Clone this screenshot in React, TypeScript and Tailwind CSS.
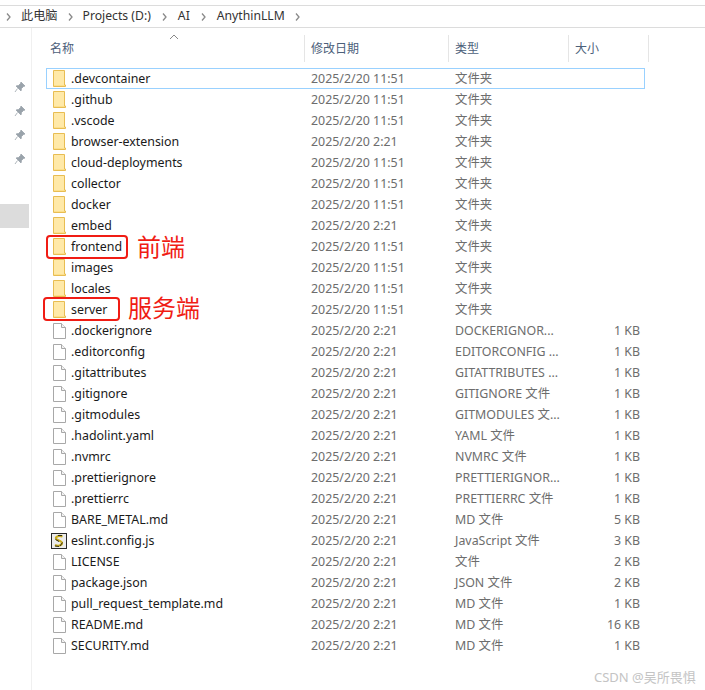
const font = "font-['Noto_Sans','Noto_Sans_CJK_SC',sans-serif]";

type Row = { name: string; date: string; type: string; size?: string; icon?: "folder" | "file" | "script" };

const d1 = "2025/2/20 11:51";
const d2 = "2025/2/20 2:21";

const rows: Row[] = [
  { name: ".devcontainer", date: d1, type: "文件夹" },
  { name: ".github", date: d1, type: "文件夹" },
  { name: ".vscode", date: d1, type: "文件夹" },
  { name: "browser-extension", date: d2, type: "文件夹" },
  { name: "cloud-deployments", date: d1, type: "文件夹" },
  { name: "collector", date: d1, type: "文件夹" },
  { name: "docker", date: d1, type: "文件夹" },
  { name: "embed", date: d2, type: "文件夹" },
  { name: "frontend", date: d1, type: "文件夹" },
  { name: "images", date: d1, type: "文件夹" },
  { name: "locales", date: d1, type: "文件夹" },
  { name: "server", date: d1, type: "文件夹" },
  { name: ".dockerignore", date: d2, type: "DOCKERIGNOR...", size: "1 KB", icon: "file" },
  { name: ".editorconfig", date: d2, type: "EDITORCONFIG ...", size: "1 KB", icon: "file" },
  { name: ".gitattributes", date: d2, type: "GITATTRIBUTES ...", size: "1 KB", icon: "file" },
  { name: ".gitignore", date: d2, type: "GITIGNORE 文件", size: "1 KB", icon: "file" },
  { name: ".gitmodules", date: d2, type: "GITMODULES 文...", size: "1 KB", icon: "file" },
  { name: ".hadolint.yaml", date: d2, type: "YAML 文件", size: "1 KB", icon: "file" },
  { name: ".nvmrc", date: d2, type: "NVMRC 文件", size: "1 KB", icon: "file" },
  { name: ".prettierignore", date: d2, type: "PRETTIERIGNOR...", size: "1 KB", icon: "file" },
  { name: ".prettierrc", date: d2, type: "PRETTIERRC 文件", size: "1 KB", icon: "file" },
  { name: "BARE_METAL.md", date: d2, type: "MD 文件", size: "5 KB", icon: "file" },
  { name: "eslint.config.js", date: d2, type: "JavaScript 文件", size: "3 KB", icon: "script" },
  { name: "LICENSE", date: d2, type: "文件", size: "2 KB", icon: "file" },
  { name: "package.json", date: d2, type: "JSON 文件", size: "2 KB", icon: "file" },
  { name: "pull_request_template.md", date: d2, type: "MD 文件", size: "1 KB", icon: "file" },
  { name: "README.md", date: d2, type: "MD 文件", size: "16 KB", icon: "file" },
  { name: "SECURITY.md", date: d2, type: "MD 文件", size: "1 KB", icon: "file" },
];

function FolderIcon() {
  return (
    <svg width="13" height="17" viewBox="0 0 13 17" className="shrink-0">
      <path d="M0.5 0.5H11.5V15H12.5V16.5H0.5Z" fill="#fde08c" stroke="#e8bd52" />
      <rect x="1" y="1" width="10" height="14" fill="#ffe9a8" />
    </svg>
  );
}

function FileIcon() {
  return (
    <svg width="13" height="16" viewBox="0 0 13 16" className="shrink-0">
      <path d="M0.5 0.5H8.5L12.5 4.5V15.5H0.5Z" fill="#ffffff" stroke="#a8a8a8" />
      <path d="M8.5 0.5V4.5H12.5" fill="#f2f2f2" stroke="#a8a8a8" />
    </svg>
  );
}

function ScriptIcon() {
  return (
    <svg width="16" height="16" viewBox="0 0 16 16" className="-ml-[2px] mr-[-1px] shrink-0">
      <rect x="0.5" y="0.5" width="15" height="15" fill="#ececec" stroke="#2a2a2a" />
      <path d="M11.5 3.5C8 2 4.5 3.5 5 5.5C5.5 7.5 11 7.5 11 10C11 12.5 7 13.5 4 12" fill="none" stroke="#c9ac1c" strokeWidth="2.2" />
      <path d="M11 2.5L7 2.5M4.5 6.5L8 8.5M11.5 9.5L9 13M4 13L8 13.5" fill="none" stroke="#1c1c1c" strokeWidth="0.9" />
    </svg>
  );
}

function Pin() {
  return (
    <svg width="12" height="12" viewBox="0 0 12 12">
      <path d="M7 1L11 5L9.5 5.5L7.5 7.5L7 10L2 5L4.5 4.5L6.5 2.5Z M3.5 7.5L1 11" fill="#9aa3ab" stroke="#9aa3ab" strokeWidth="0.8" />
    </svg>
  );
}

function Chevron() {
  return (
    <svg width="5" height="8" viewBox="0 0 5 8" className="shrink-0">
      <path d="M1 0.5L4 4L1 7.5" fill="none" stroke="#8a8a8a" strokeWidth="1.3" />
    </svg>
  );
}

function RowItem({ row, focused }: { row: Row; focused: boolean }) {
  return (
    <div className={`-ml-[1px] flex h-[21px] w-[599px] items-center border text-[12.4px] leading-[19px] ${focused ? "border-[#99d1ff]" : "border-transparent"}`}>
      <div className="flex w-[264px] items-center gap-[5px] pl-[6px] text-[#1a1a1a]">
        {row.icon === "file" ? <FileIcon /> : row.icon === "script" ? <ScriptIcon /> : <FolderIcon />}
        <span className="whitespace-nowrap">{row.name}</span>
      </div>
      <div className="w-[144px] whitespace-nowrap text-[#6d6d6d]">{row.date}</div>
      <div className="w-[119px] whitespace-nowrap text-[#6d6d6d]">{row.type}</div>
      <div className="w-[66px] whitespace-nowrap text-right text-[#6d6d6d]">{row.size}</div>
    </div>
  );
}

export default function App() {
  return (
    <div className={`relative h-[690px] w-[705px] overflow-hidden bg-white ${font}`}>
      <div className="mt-[5px] flex h-[23px] items-center gap-[10px] border-y border-[#dcdcdc] pl-[6px] text-[12.2px] text-[#333333]">
        <Chevron />
        <span>此电脑</span>
        <Chevron />
        <span className="pr-[1px]">Projects (D:)</span>
        <Chevron />
        <span className="pl-[1px] pr-[1px]">AI</span>
        <Chevron />
        <span className="pl-[1px]">AnythinLLM</span>
        <Chevron />
      </div>

      <div className="flex">
        <div className="flex h-[662px] w-[32px] shrink-0 flex-col border-r border-[#f0f0f0]">
          <div className="flex flex-col items-center gap-[12px] pl-[9px] pt-[53px]">
            <Pin />
            <Pin />
            <Pin />
            <Pin />
          </div>
          <div className="mt-[39px] h-[24px] w-[29px] bg-[#dcdcdc]" />
        </div>

        <div className="ml-[15px] min-w-0 flex-1">
          <div className="relative mt-[7px] flex h-[27px] items-center text-[12px] text-[#4c607a]">
            <div className="flex h-full w-[258px] items-center border-r border-[#e5e5e5] pl-[3px]">名称</div>
            <div className="flex h-full w-[144px] items-center border-r border-[#e5e5e5] pl-[6px]">修改日期</div>
            <div className="flex h-full w-[120px] items-center border-r border-[#e5e5e5] pl-[6px]">类型</div>
            <div className="flex h-full w-[80px] items-center border-r border-[#e5e5e5] pl-[6px]">大小</div>
            <svg width="10" height="6" viewBox="0 0 10 6" className="absolute -top-[1px] left-[122px]">
              <path d="M1 5L5 1L9 5" fill="none" stroke="#888888" />
            </svg>
          </div>
          <div className="mt-[6px]">
            {rows.map((row, i) => (
              <RowItem key={row.name} row={row} focused={i === 0} />
            ))}
          </div>
        </div>
      </div>

      <div className="absolute left-[46px] top-[235px] h-[24px] w-[82px] rounded-[4px] border-2 border-[#f01c14]" />
      <div className="absolute left-[43px] top-[297px] h-[24px] w-[77px] rounded-[4px] border-2 border-[#f01c14]" />
      <div className="absolute left-[137px] top-[231px] text-[24px] leading-[32px] text-[#f01c14]">前端</div>
      <div className="absolute left-[128px] top-[292px] text-[24px] leading-[32px] text-[#f01c14]">服务端</div>
      <div className="absolute left-[594px] top-[668px] text-[13px] leading-[18px] text-[#c4c4c4]">CSDN @吴所畏惧</div>
    </div>
  );
}
